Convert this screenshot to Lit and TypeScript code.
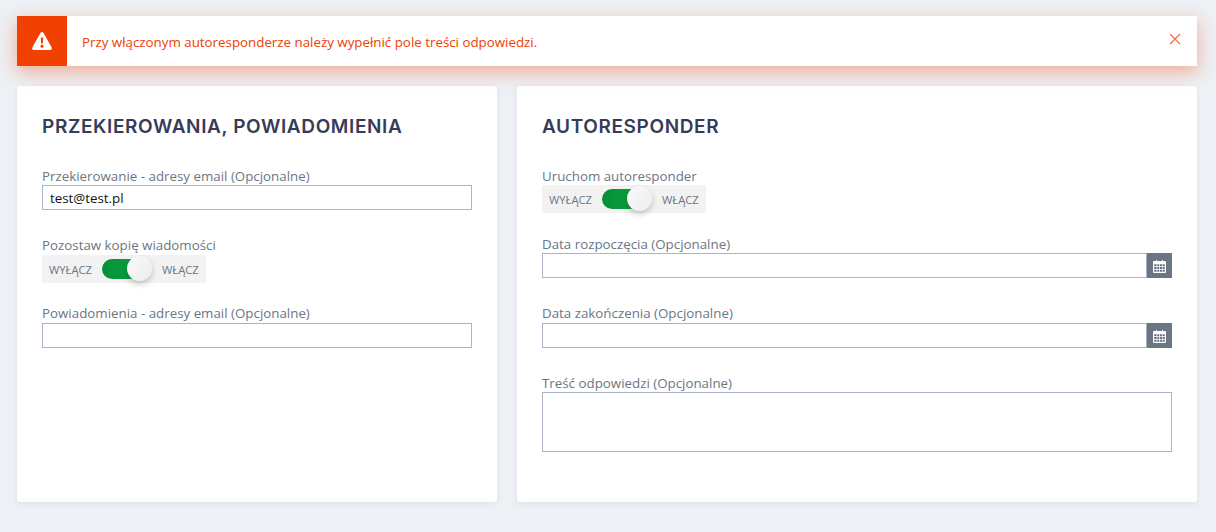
import { LitElement, html, css } from "lit";
import { customElement } from "lit/decorators.js";

@customElement("app-root")
export class AppRoot extends LitElement {
  static styles = css`
    :host { display: block; min-height: 532px; background: #edf0f4; font-family: "Open Sans", sans-serif; box-sizing: border-box; padding: 16px 19px 30px 17px; }
    * { box-sizing: border-box; }
    .alert { display: flex; align-items: center; height: 50px; background: #fff; box-shadow: 0 6px 18px rgba(240,65,0,.38); position: relative; }
    .alert-icon { width: 50px; height: 50px; background: #f04100; display: flex; align-items: center; justify-content: center; }
    .alert-text { margin-left: 15px; flex: 1; font-size: 13.33px; color: #f04100; line-height: 17px; margin-top: 2px; }
    .close { margin-right: 16px; margin-top: -5px; display: flex; }
    .cols { display: flex; gap: 20px; margin-top: 20px; }
    .card { background: #fff; height: 416px; border-radius: 3px; padding: 29px 25px 0; box-shadow: 0 2px 6px rgba(40,50,80,.07); }
    .left { width: 480px; } .right { width: 680px; }
    h2 { margin: 0 0 28px; font-family: "Inter", sans-serif; font-weight: 600; font-size: 19px; line-height: 24px; color: #363b58; white-space: nowrap; letter-spacing: .62px; }
    label { display: block; font-size: 13.33px; line-height: 18px; color: #6b7686; }
    label.loose { margin-bottom: 1px; }
    .field { display: block; height: 25px; width: 100%; background: #fff; border: 1px solid #aab4c6; font-size: 13.33px; line-height: 25px; padding: 0 7px; color: #111; }
    .row { margin-bottom: 27px; }
    .row.tight { margin-bottom: 26px; }
    .group { display: flex; }
    .group .field { flex: 1; }
    .addon { width: 25px; height: 25px; background: #6a7683; display: flex; align-items: center; justify-content: center; }
    .area { height: 60px; }
    .switch { display: flex; align-items: center; width: 164px; height: 28px; background: #f2f2f2; border-radius: 2px; font-size: 11.2px; color: #6b7686; position: relative; }
    .off { width: 60px; padding-left: 7px; }
    .track { width: 38px; height: 20px; background: linear-gradient(90deg, #07903a, #09a23e); border-radius: 10px; }
    .knob { position: absolute; left: 85px; top: 1px; width: 25px; height: 25px; border-radius: 50%; background: linear-gradient(135deg, #fafafa, #ececec); box-shadow: 0 3px 6px rgba(0,0,0,.22); }
    .on { margin-left: 22px; }
    .sw-row { margin-bottom: 22px; }
    .sw-row.tight { margin-bottom: 21px; }
  `;

  private toggle() {
    return html`<div class="switch"><span class="off">WYŁĄCZ</span><span class="track"></span><span class="knob"></span><span class="on">WŁĄCZ</span></div>`;
  }

  private cal() {
    return html`<div class="addon"><svg width="13" height="14" viewBox="0 0 13 14"><path fill="#fff" d="M1 2h2V1h1v1h5V1h1v1h2a1 1 0 0 1 1 1v10a1 1 0 0 1-1 1H1a1 1 0 0 1-1-1V3a1 1 0 0 1 1-1z"/><path fill="#6a7683" d="M1.2 5.2h2.4v2H1.2zM4.3 5.2h2v2h-2zM7 5.2h2v2H7zM9.6 5.2h2.2v2H9.6zM1.2 8h2.4v2H1.2zM4.3 8h2v2h-2zM7 8h2v2H7zM9.6 8h2.2v2H9.6zM1.2 10.7h2.4v2H1.2zM4.3 10.7h2v2h-2zM7 10.7h2v2H7zM9.6 10.7h2.2v2H9.6z"/></svg></div>`;
  }

  render() {
    return html`
      <div class="alert">
        <div class="alert-icon"><svg width="20" height="18" viewBox="0 0 20 18"><path fill="#fff" fill-rule="evenodd" d="M10 0c.6 0 1.1.3 1.4.8l8.3 14.7c.6 1.1-.2 2.5-1.4 2.5H1.7C.5 18-.3 16.6.3 15.5L8.6.8C8.9.3 9.4 0 10 0zM8.8 5.5l.3 6h1.8l.3-6zM10 12.6a1.6 1.6 0 1 0 0 3.2 1.6 1.6 0 0 0 0-3.2z"/></svg></div>
        <div class="alert-text">Przy włączonym autoresponderze należy wypełnić pole treści odpowiedzi.</div>
        <div class="close"><svg width="12" height="12" viewBox="0 0 12 12"><path d="M1 1l10 10M11 1L1 11" stroke="#f4734a" stroke-width="1.4" fill="none"/></svg></div>
      </div>
      <div class="cols">
        <div class="card left">
          <h2>PRZEKIEROWANIA, POWIADOMIENIA</h2>
          <div class="row tight"><label>Przekierowanie - adresy email (Opcjonalne)</label><div class="field">test@test.pl</div></div>
          <div class="sw-row tight"><label class="loose">Pozostaw kopię wiadomości</label>${this.toggle()}</div>
          <div class="row"><label class="loose">Powiadomienia - adresy email (Opcjonalne)</label><div class="field"></div></div>
        </div>
        <div class="card right">
          <h2>AUTORESPONDER</h2>
          <div class="sw-row"><label>Uruchom autoresponder</label>${this.toggle()}</div>
          <div class="row tight"><label>Data rozpoczęcia (Opcjonalne)</label><div class="group"><div class="field"></div>${this.cal()}</div></div>
          <div class="row tight"><label class="loose">Data zakończenia (Opcjonalne)</label><div class="group"><div class="field"></div>${this.cal()}</div></div>
          <div class="row"><label>Treść odpowiedzi (Opcjonalne)</label><div class="field area"></div></div>
        </div>
      </div>
    `;
  }
}
